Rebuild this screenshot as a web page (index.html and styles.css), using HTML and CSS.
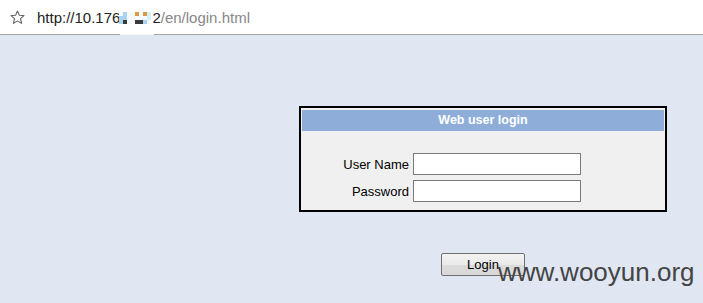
FILE: index.html
```html
<!DOCTYPE html>
<html lang="en">
<head>
<meta charset="utf-8">
<title>Web user login</title>
<link rel="stylesheet" href="styles.css">
</head>
<body>
<div class="addressbar">
  <svg class="star" width="15" height="15" viewBox="0 0 15 15" aria-hidden="true">
    <path d="M7.5 1 L9.4 5.2 L14 5.6 L10.5 8.7 L11.6 13.4 L7.5 10.9 L3.4 13.4 L4.5 8.7 L1 5.6 L5.6 5.2 Z" fill="none" stroke="#666666" stroke-width="1.1" stroke-linejoin="round"/>
  </svg>
  <div class="url"><span class="host">http://10.176</span><span class="mosaic"><i class="w"></i><i class="b"></i><i class="w"></i><i class="w"></i><i class="o"></i><i class="w"></i><i class="o"></i><i class="c"></i><i class="b"></i><i class="b"></i><i class="w"></i><i class="w"></i><i class="w"></i><i class="w"></i><i class="w"></i><i class="c"></i><i class="b"></i><i class="d"></i><i class="w"></i><i class="w"></i><i class="d"></i><i class="d"></i><i class="b"></i><i class="w"></i></span><span class="host">2</span><span class="path">/en/login.html</span></div>
</div>
<div class="barline"><div class="seg gray left"></div><div class="seg light"></div><div class="seg gray rest"></div></div>

<main class="page">
  <div class="loginbox">
    <div class="title">Web user login</div>
    <div class="fields">
      <label class="label" for="user">User Name</label>
      <input class="field" id="user" type="text">
      <label class="label" for="pass">Password</label>
      <input class="field" id="pass" type="password">
    </div>
  </div>
  <button class="loginbtn" type="button">Login</button>
  <div class="watermark">www.wooyun.org</div>
</main>
</body>
</html>
```

FILE: styles.css
```css
html, body {
  margin: 0;
  padding: 0;
}
body {
  background: #e0e7f3;
  font-family: "Liberation Sans", Arial, sans-serif;
  width: 703px;
  height: 303px;
  overflow: hidden;
  position: relative;
}
.addressbar {
  height: 34px;
  background: #ffffff;
  display: flex;
  align-items: center;
  padding-left: 10px;
  box-sizing: border-box;
}
.star {
  display: block;
}
.url {
  margin-left: 12px;
  font-size: 15px;
  line-height: 17px;
  display: flex;
  align-items: center;
  white-space: nowrap;
}
.host {
  color: #222222;
}
.path {
  color: #888888;
}
.mosaic {
  display: grid;
  grid-template-columns: repeat(8, 4px);
  grid-template-rows: repeat(3, 4px);
  width: 33px;
  margin-left: -1px;
  margin-top: 2px;
}
.mosaic i { display: block; }
.mosaic .w { background: #f6f9fb; }
.mosaic .b { background: #a9d3ee; }
.mosaic .c { background: #d6f1f6; }
.mosaic .o { background: #d99a4a; }
.mosaic .d { background: #3a3a3a; }
.barline {
  display: flex;
  height: 1px;
}
.seg.gray { background: #a4a4a4; }
.seg.left { width: 120px; }
.seg.light { width: 34px; background: #f7f8fb; }
.seg.rest { flex: 1; }

.page {
  padding-left: 299px;
  padding-top: 71px;
}
.loginbox {
  width: 368px;
  box-sizing: border-box;
  border: 2px solid #000;
  background: #f0f0f0;
  padding: 2px 1px 1px 1px;
}
.title {
  height: 21px;
  background: #8eaed9;
  color: #ffffff;
  font-weight: bold;
  font-size: 12.5px;
  line-height: 21px;
  text-align: center;
}
.fields {
  display: grid;
  grid-template-columns: 107px 168px;
  column-gap: 4px;
  row-gap: 5px;
  padding-top: 22px;
  padding-bottom: 7px;
  align-items: center;
}
.label {
  text-align: right;
  font-size: 13px;
  color: #000;
}
.field {
  width: 168px;
  height: 22px;
  box-sizing: border-box;
  border: 1px solid #7a7a7a;
  background: #fff;
  margin: 0;
  padding: 0 2px;
  font-size: 13px;
}
.loginbtn {
  display: block;
  margin: 41px 0 0 142px;
  width: 84px;
  height: 23px;
  box-sizing: border-box;
  border: 1px solid #707070;
  border-radius: 2px;
  background: linear-gradient(#f3f3f3, #e9e9e9 50%, #dcdcdc 51%, #d8d8d8);
  font-family: "Liberation Sans", Arial, sans-serif;
  font-size: 13px;
  color: #000;
  padding: 0;
  line-height: 20px;
}
.watermark {
  position: absolute;
  left: 498px;
  top: 259px;
  font-size: 26px;
  line-height: 26px;
  color: #444444;
  white-space: nowrap;
}
```
